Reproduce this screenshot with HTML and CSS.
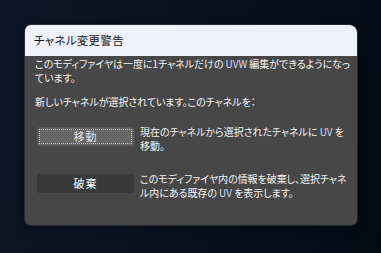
FILE: index.html
```html
<!DOCTYPE html>
<html lang="ja">
<head>
<meta charset="utf-8">
<link rel="stylesheet" href="styles.css">
</head>
<body>
<div class="dialog">
  <div class="titlebar">チャネル変更警告</div>
  <div class="content">
    <p class="para">このモディファイヤは一度に1チャネルだけの <span class="latin">UVW</span> 編集ができるようになっています。</p>
    <p class="para second">新しいチャネルが選択されています。このチャネルを：</p>
    <div class="option first">
      <div class="btn btn-focus">移動</div>
      <p class="desc">現在のチャネルから選択されたチャネルに <span class="latin">UV</span> を移動。</p>
    </div>
    <div class="option">
      <div class="btn btn-dark">破棄</div>
      <p class="desc">このモディファイヤ内の情報を破棄し、選択チャネル内にある既存の <span class="latin">UV</span> を表示します。</p>
    </div>
  </div>
</div>
</body>
</html>
```
FILE: styles.css
```css
html, body {
  margin: 0;
  padding: 0;
}
body {
  width: 381px;
  height: 253px;
  overflow: hidden;
  background: linear-gradient(100deg, #0b1527 0%, #08111f 55%, #050a14 100%);
  font-family: "Noto Sans CJK JP", "Noto Sans", sans-serif;
  font-feature-settings: "palt";
  padding-top: 25px;
  box-sizing: border-box;
}
.dialog {
  margin-left: 25px;
  width: 332px;
  height: 200px;
  background: #474747;
  border-radius: 6px 8px 6px 6px;
  overflow: hidden;
  box-shadow: 0 0 0 1px rgba(120, 130, 150, 0.25), 0 2px 8px rgba(0, 0, 0, 0.5);
}
.titlebar {
  height: 31px;
  background: #eef1fa;
  color: #141414;
  font-size: 11.5px;
  line-height: 31px;
  padding-left: 9px;
  letter-spacing: 0.3px;
}
.content {
  padding: 1px 4px 0 10px;
  color: #f4f4f4;
  font-size: 10px;
  line-height: 14px;
  letter-spacing: -0.05px;
}
.para {
  margin: 0;
}
.second {
  margin-top: 10px;
}
.latin {
  color: #cfdcff;
}
.option {
  display: flex;
  align-items: flex-start;
  margin-top: 19px;
}
.option.first {
  margin-top: 16px;
}
.btn {
  flex: none;
  width: 97px;
  height: 19px;
  margin: 2px 6px 0 2px;
  box-sizing: border-box;
  border-radius: 3px;
  text-align: center;
  font-size: 11px;
  line-height: 19px;
  letter-spacing: 1px;
}
.btn-focus {
  background: #656565;
  color: #e2e2e2;
  border: 1px solid #5c5c5c;
  outline: 1px dotted #c4c4c4;
  outline-offset: -3px;
  line-height: 17px;
}
.btn-dark {
  background: #393939;
  color: #ffffff;
}
.desc {
  margin: 0 6px 0 0;
  flex: 1;
}
```
